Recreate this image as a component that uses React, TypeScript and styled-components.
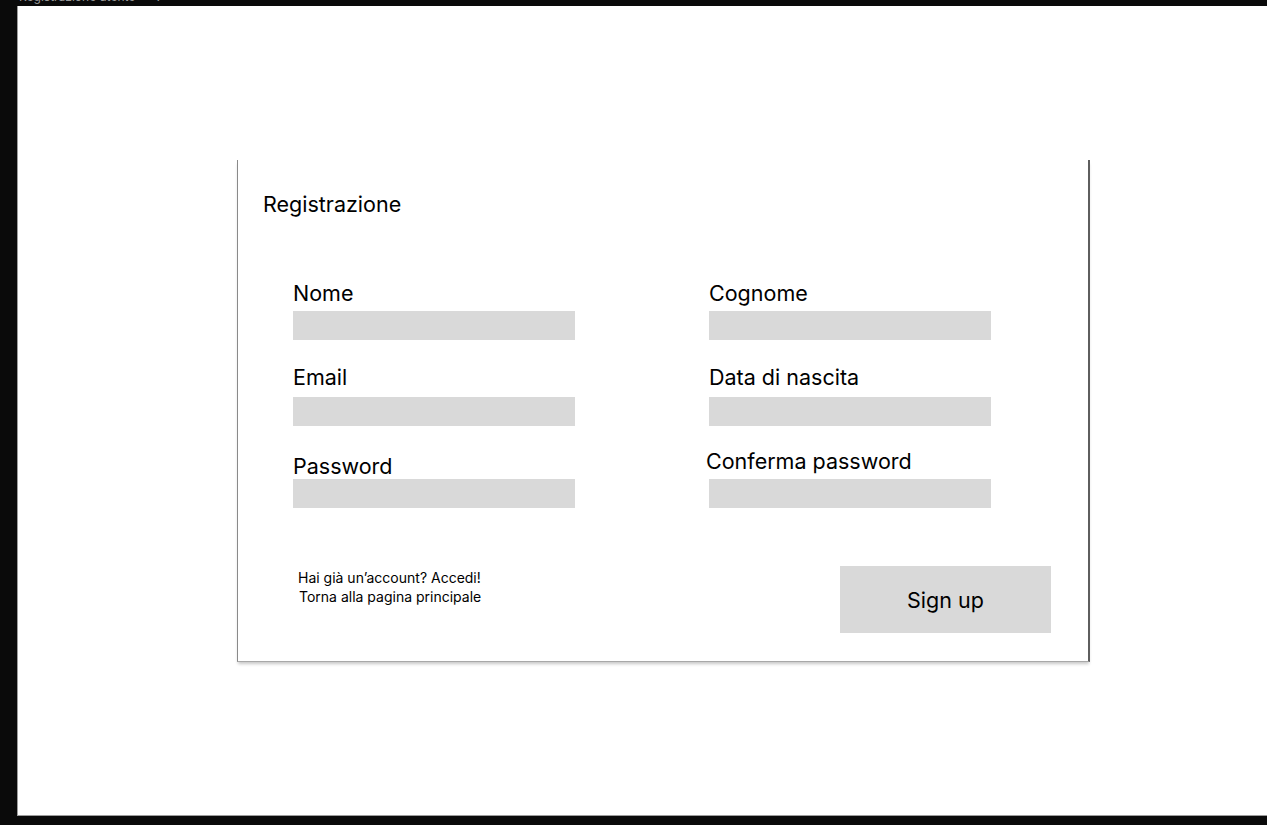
import React from "react";
import styled, { createGlobalStyle } from "styled-components";

const Global = createGlobalStyle`
  html, body {
    margin: 0;
    padding: 0;
    background: #0a0a0a;
  }
  body {
    font-family: Inter, "Noto Sans", Arial, sans-serif;
    color: #000;
  }
  * { box-sizing: border-box; }
`;

const Page = styled.div`
  width: 1267px;
  height: 825px;
  padding-left: 17px;
  display: flex;
  flex-direction: column;
  overflow: hidden;
`;

const FrameName = styled.div`
  height: 6px;
  overflow: hidden;
  display: flex;
  align-items: flex-end;
  padding: 0 0 2px 2px;
  font-size: 12px;
  line-height: 14px;
  color: #9a9a9a;
  white-space: nowrap;
`;

const Frame = styled.div`
  width: 1250px;
  height: 810px;
  background: #fff;
  border-left: 1px solid #9c9c9c;
  border-bottom: 1px solid #9c9c9c;
  padding-top: 154px;
  padding-left: 219px;
`;

const Card = styled.section`
  width: 853px;
  height: 502px;
  background: #fff;
  border-left: 1px solid #8a8a8a;
  border-right: 2px solid #5e5e5e;
  border-bottom: 1px solid #a8a8a8;
  box-shadow: 0 3px 3px -1px rgba(0, 0, 0, 0.22);
  display: flex;
  flex-direction: column;
  padding: 32px 0 0 0;
`;

const Title = styled.h1`
  margin: 0 0 0 25px;
  font-size: 21.5px;
  line-height: 24px;
  font-weight: 400;
`;

const Grid = styled.div`
  display: grid;
  grid-template-columns: 282px 282px;
  column-gap: 134px;
  align-items: end;
  margin: 0 0 0 55px;
`;

const Field = styled.label<{ $mt: number; $gap: number }>`
  display: flex;
  flex-direction: column;
  margin-top: ${(p) => p.$mt}px;
  gap: ${(p) => p.$gap}px;
`;

const LabelText = styled.span<{ $shift?: number }>`
  font-size: 21.5px;
  line-height: 24px;
  font-weight: 400;
  white-space: nowrap;
  margin-left: ${(p) => p.$shift ?? 0}px;
`;

const Input = styled.div`
  width: 282px;
  height: 29px;
  background: #d9d9d9;
`;

const Footer = styled.div`
  margin-top: 58px;
  display: flex;
  justify-content: space-between;
  align-items: flex-start;
  padding: 0 37px 0 60px;
`;

const Links = styled.div`
  display: flex;
  flex-direction: column;
  padding-top: 2px;
  font-size: 14px;
  line-height: 19px;
`;

const LinkText = styled.span<{ $shift?: number }>`
  margin-left: ${(p) => p.$shift ?? 0}px;
  cursor: pointer;
`;

const Button = styled.button`
  width: 211px;
  height: 67px;
  border: none;
  background: #d9d9d9;
  font-family: Inter, "Noto Sans", Arial, sans-serif;
  font-size: 21.5px;
  color: #000;
  padding: 0;
  cursor: pointer;
`;

const fields = [
  { label: "Nome", mt: 65, gap: 6 },
  { label: "Cognome", mt: 65, gap: 6 },
  { label: "Email", mt: 25, gap: 8 },
  { label: "Data di nascita", mt: 25, gap: 8 },
  { label: "Password", mt: 23, gap: 1 },
  { label: "Conferma password", mt: 23, gap: 6, shift: -3 },
];

export default function App() {
  return (
    <Page>
      <Global />
      <FrameName>Registrazione utente&nbsp;&nbsp;&nbsp;&nbsp;&nbsp;&nbsp;?</FrameName>
      <Frame>
        <Card>
          <Title>Registrazione</Title>
          <Grid>
            {fields.map((f) => (
              <Field key={f.label} $mt={f.mt} $gap={f.gap}>
                <LabelText $shift={f.shift}>{f.label}</LabelText>
                <Input />
              </Field>
            ))}
          </Grid>
          <Footer>
            <Links>
              <LinkText>Hai già un’account? Accedi!</LinkText>
              <LinkText $shift={1}>Torna alla pagina principale</LinkText>
            </Links>
            <Button>Sign up</Button>
          </Footer>
        </Card>
      </Frame>
    </Page>
  );
}
